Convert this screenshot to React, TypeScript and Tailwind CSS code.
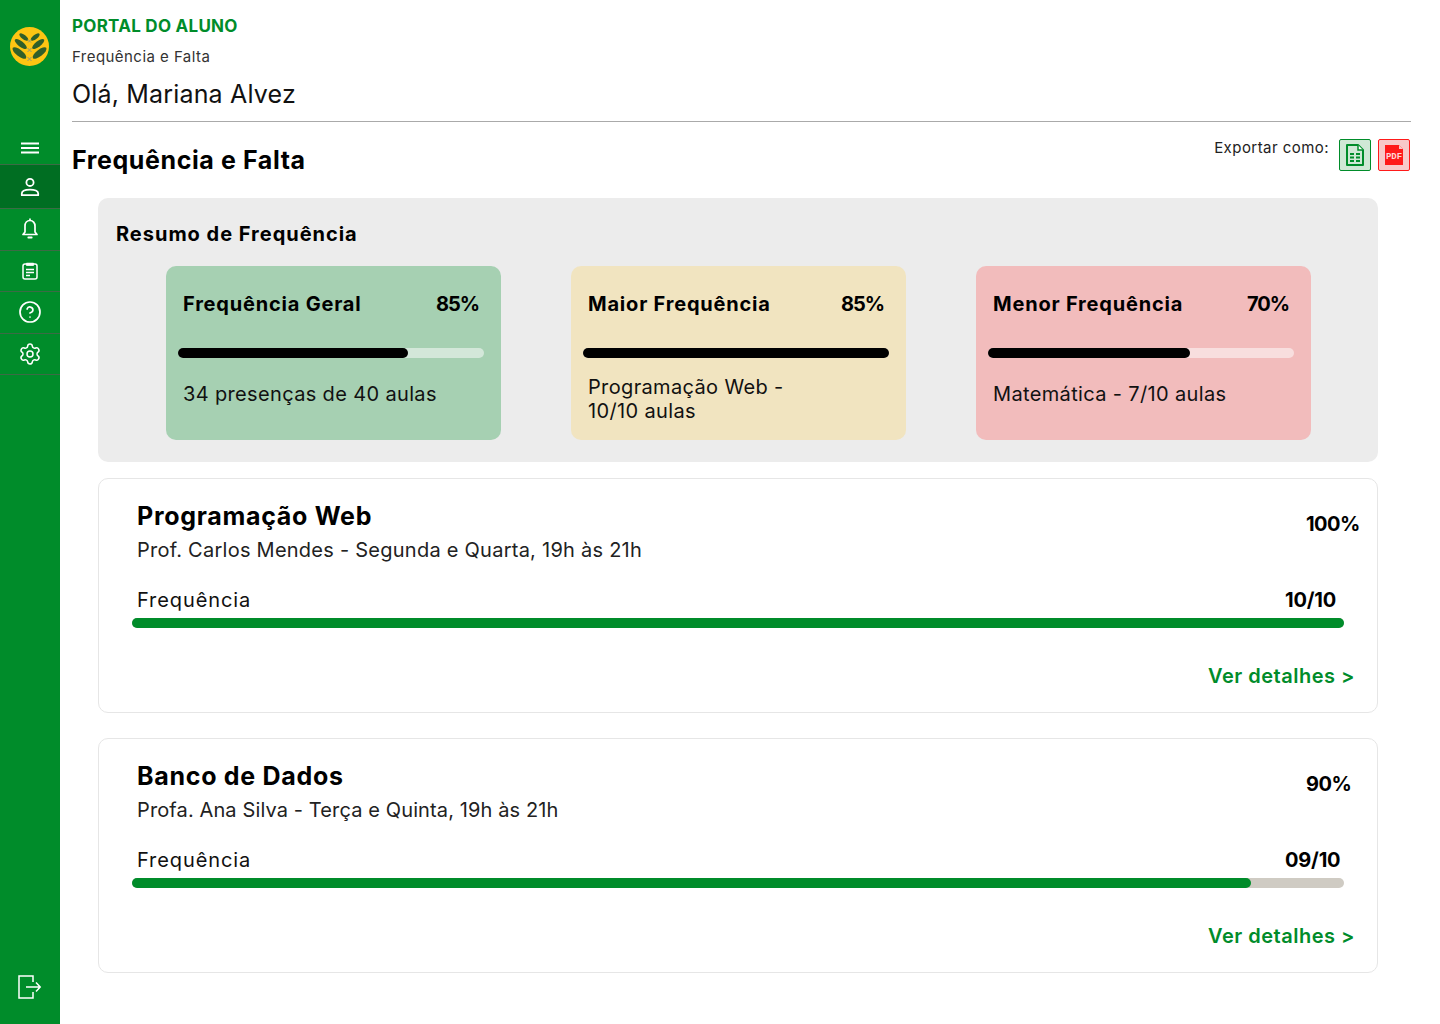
import { Settings, CircleHelp } from "lucide-react"

const font = "font-['Inter',sans-serif]"

function Logo() {
  const leaves = [
    [13.8, 10, 5.4, 2.2],
    [10.8, 17, 7.4, 2.7],
    [9.4, 26, 8.4, 3.2],
  ]
  return (
    <svg width="39" height="39" viewBox="0 0 39 39" className="block">
      <circle cx="19.5" cy="19.5" r="19.5" fill="#fdc513" />
      {leaves.map(([x, y, rx, ry], i) => (
        <g key={i} fill="#2f5f2a">
          <ellipse cx={x} cy={y} rx={rx} ry={ry} transform={`rotate(38 ${x} ${y})`} />
          <ellipse cx={39 - x} cy={y} rx={rx} ry={ry} transform={`rotate(-38 ${39 - x} ${y})`} />
        </g>
      ))}
      <path d="M18 12.500l3 3M21 12.500l-3 3M17.500 21l4 4M21.500 21l-4 4M17.500 30l4 4M21.500 30l-4 4" stroke="#8f9a78" strokeWidth="1" fill="none" />
    </svg>
  )
}

function MenuIcon() {
  return (
    <svg width="18" height="12" viewBox="0 0 18 12" fill="white">
      <rect x="0" y="0.500" width="18" height="2" />
      <rect x="0" y="5" width="18" height="2" />
      <rect x="0" y="9.500" width="18" height="2" />
    </svg>
  )
}

function UserIcon() {
  return (
    <svg width="20" height="20" viewBox="0 0 20 20" fill="none" stroke="white" strokeWidth="1.800">
      <circle cx="10" cy="5.400" r="3.600" />
      <path d="M1.800 18.200v-1.600c0-2.600 3.600-4 8.200-4s8.200 1.400 8.200 4v1.600z" strokeLinejoin="round" />
    </svg>
  )
}

function BellIcon() {
  return (
    <svg width="18" height="22" viewBox="0 0 18 22" fill="none" stroke="white" strokeWidth="1.700">
      <path d="M9 2.500c-3 0-5 2.400-5 5.500v6L2 16.500h14L14 14V8c0-3.100-2-5.500-5-5.500z" strokeLinejoin="round" />
      <path d="M9 .6v2" />
      <path d="M7.300 19.500h3.400" strokeWidth="1.800" strokeLinecap="round" />
    </svg>
  )
}

function ClipboardIcon() {
  return (
    <svg width="16" height="18" viewBox="0 0 16 18" fill="none" stroke="white" strokeWidth="1.500">
      <rect x="1" y="2" width="14" height="15" rx="2" />
      <path d="M4.500 1.200h7v2.300h-7z" fill="white" strokeWidth="0.800" />
      <path d="M4 7.500h8M4 10.500h8M4 13.500h4" strokeWidth="1.300" />
    </svg>
  )
}

function LogoutIcon() {
  return (
    <svg width="24" height="24" viewBox="0 0 24 24" fill="none" stroke="white" strokeWidth="1.500">
      <path d="M15 7V1H1v22h14v-6" />
      <path d="M8 12h14M18 7.500l4.200 4.500-4.200 4.500" />
    </svg>
  )
}

function SheetIcon() {
  return (
    <svg width="18" height="22" viewBox="0 0 18 22" fill="none" stroke="#008c2a" strokeWidth="2">
      <path d="M1 1h11l5 5v15H1z" strokeLinejoin="round" />
      <path d="M12 1v5h5" fill="white" strokeWidth="1.500" />
      <path d="M4 10h4M10 10h4M4 13.500h4M10 13.500h4M4 17h4M10 17h4" strokeWidth="2" />
    </svg>
  )
}

function PdfIcon() {
  return (
    <svg width="20" height="22" viewBox="0 0 20 22">
      <path d="M1 1h14l4 4v16H1z" fill="#ff1a1a" />
      <path d="M15 1v4h4z" fill="#f8c9c9" />
      <text x="10" y="15" textAnchor="middle" fontSize="9" fontWeight="700" fill="#ffd6d6" fontFamily="Liberation Mono, monospace">PDF</text>
    </svg>
  )
}

function NavItem({ children, active }: { children: React.ReactNode; active?: boolean }) {
  return (
    <div className={`flex items-center justify-center border-b border-[#3c6b45] ${active ? "h-[44px] bg-[#006e22]" : "h-[41.500px]"}`}>
      {children}
    </div>
  )
}

function SummaryCard({ title, pct, fill, text, bg, track, textTop }: { title: string; pct: string; fill: number; text: string; bg: string; track: string; textTop: string }) {
  return (
    <div className={`w-[335px] h-[174px] rounded-[10px] ${bg} pl-[12px] pr-[17px] flex flex-col`}>
      <div className="flex items-center justify-between pl-[5px] pr-[5px] pt-[26px] text-[20px] leading-[24px] font-bold text-black">
        <span className="tracking-[0.8px]">{title}</span>
        <span className="tracking-[-1px]">{pct}</span>
      </div>
      <div className={`mt-[32px] h-[10px] rounded-full ${track}`}>
        <div className="h-full rounded-full bg-black" style={{ width: `${fill}%` }} />
      </div>
      <p className={`pl-[5px] ${textTop} text-[20px] leading-[24px] tracking-[0.35px] text-[#111] whitespace-pre-line`}>{text}</p>
    </div>
  )
}

function CourseCard({ title, sub, subTracking, pct, count, fill }: { title: string; sub: string; subTracking: string; pct: string; count: string; fill: number }) {
  return (
    <div className="h-[235px] rounded-[10px] border border-[#e6e6e6] bg-white pt-[21px]">
      <div className="flex justify-between pl-[38px]">
        <div>
          <h3 className="text-[25px] leading-[32px] tracking-[0.7px] font-bold text-black">{title}</h3>
          <p className={`mt-[2px] text-[20px] leading-[32px] ${subTracking} text-[#222]`}>{sub}</p>
        </div>
        <span className="w-[71px] pt-[8px] text-[20px] leading-[32px] tracking-[-0.5px] font-bold text-black">{pct}</span>
      </div>
      <div className="mt-[22px] px-[33px]">
        <div className="flex justify-between pl-[5px] text-[20px] leading-[24px]">
          <span className="tracking-[0.9px] text-[#111]">Frequência</span>
          <span className="w-[59px] tracking-[-0.2px] font-bold text-black">{count}</span>
        </div>
        <div className="mt-[6px] h-[10px] rounded-full bg-[#cfcbc3]">
          <div className="h-full rounded-full bg-[#008c2a]" style={{ width: `${fill}%` }} />
        </div>
      </div>
      <div className="mt-[36px] pr-[22px] text-right text-[20px] leading-[24px] tracking-[0.5px] font-semibold text-[#008c2a]">Ver detalhes &gt;</div>
    </div>
  )
}

export default function App() {
  return (
    <div className={`flex min-h-[1024px] bg-white ${font}`}>
      <aside className="w-[60px] shrink-0 bg-[#008c2a] flex flex-col">
        <div className="flex justify-center pt-[27px] pr-[1px] h-[124px]">
          <Logo />
        </div>
        <div className="h-[41px] flex items-center justify-center pt-[7px] border-b border-[#3c6b45]">
          <MenuIcon />
        </div>
        <NavItem active><UserIcon /></NavItem>
        <NavItem><BellIcon /></NavItem>
        <NavItem><ClipboardIcon /></NavItem>
        <NavItem><CircleHelp size={24} color="white" strokeWidth={1.700} /></NavItem>
        <NavItem><Settings size={24} color="white" strokeWidth={1.500} /></NavItem>
        <div className="mt-auto pb-[25px] flex justify-center">
          <LogoutIcon />
        </div>
      </aside>

      <main className="flex-1 pl-[12px] pr-[29px] pt-[16px]">
        <p className="text-[17px] leading-[20px] tracking-[0.27px] font-bold text-[#008c2a]">PORTAL DO ALUNO</p>
        <p className="mt-[11px] text-[15px] leading-[20px] tracking-[0.45px] text-[#333]">Frequência e Falta</p>
        <p className="mt-[12px] text-[25px] leading-[30px] tracking-[0.17px] text-[#111]">Olá, Mariana Alvez</p>
        <div className="mt-[12px] h-px bg-[#aaa]" />

        <div className="flex justify-between">
          <h1 className="mt-[22px] text-[25px] leading-[32px] tracking-[0.6px] font-bold text-black">Frequência e Falta</h1>
          <div className="flex items-start pt-[17px] pr-[1px]">
            <span className="mt-[-1px] text-[15px] leading-[20px] tracking-[0.45px] text-[#222]">Exportar como:</span>
            <div className="ml-[10px] w-[32px] h-[32px] rounded-[2px] border border-[#008c2a] bg-[#cfe8d5] flex items-center justify-center">
              <SheetIcon />
            </div>
            <div className="ml-[7px] w-[32px] h-[32px] rounded-[2px] border border-[#ff1a1a] bg-[#f8c9c9] flex items-center justify-center">
              <PdfIcon />
            </div>
          </div>
        </div>

        <div className="ml-[26px] mr-[33px]">
          <section className="mt-[22px] h-[264px] rounded-[10px] bg-[#ececec] pl-[18px] pt-[22px]">
            <h2 className="text-[20px] leading-[28px] tracking-[0.98px] font-bold text-black">Resumo de Frequência</h2>
            <div className="mt-[18px] ml-[50px] flex gap-[70px]">
              <SummaryCard title="Frequência Geral" pct="85%" fill={75} text="34 presenças de 40 aulas" bg="bg-[#a6d0b2]" track="bg-[#d3e7d9]" textTop="mt-[24px]" />
              <SummaryCard title="Maior Frequência" pct="85%" fill={100} text={"Programação Web -\n10/10 aulas"} bg="bg-[#f1e4c0]" track="bg-[#f8f2df]" textTop="mt-[17px]" />
              <SummaryCard title="Menor Frequência" pct="70%" fill={66} text="Matemática - 7/10 aulas" bg="bg-[#f2bcbc]" track="bg-[#f8dede]" textTop="mt-[24px]" />
            </div>
          </section>

          <div className="mt-[16px] flex flex-col gap-[25px]">
            <CourseCard title="Programação Web" sub="Prof. Carlos Mendes - Segunda e Quarta, 19h às 21h" subTracking="tracking-[0.25px]" pct="100%" count="10/10" fill={100} />
            <CourseCard title="Banco de Dados" sub="Profa. Ana Silva - Terça e Quinta, 19h às 21h" subTracking="tracking-[0.12px]" pct="90%" count="09/10" fill={92.300} />
          </div>
        </div>
      </main>
    </div>
  )
}
